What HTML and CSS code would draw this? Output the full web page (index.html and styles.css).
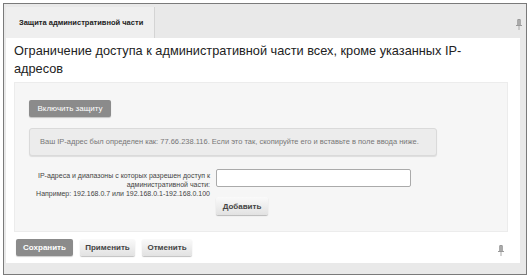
FILE: index.html
```html
<!DOCTYPE html>
<html lang="ru">
<head>
    <meta charset="UTF-8">
    <title>Защита административной части</title>
    <link rel="stylesheet" href="styles.css">
</head>
<body>
    <div class="frame">
        <div class="tabs">
            <div class="tab">Защита административной части</div>
            <span class="pin">
                <svg width="6" height="11" viewBox="0 0 6 11"><rect x="1.5" y="0" width="3" height="1" fill="#999"/><rect x="1" y="1" width="4" height="5" fill="#aaa"/><rect x="0" y="6" width="6" height="1" fill="#999"/><rect x="2.5" y="7" width="1" height="4" fill="#aaa"/></svg>
            </span>
        </div>
        <div class="panel">
            <h1>Ограничение доступа к административной части всех, кроме указанных IP-адресов</h1>
            <div class="box">
                <button type="button" class="btn dark">Включить защиту</button>
                <div class="note">Ваш IP-адрес был определен как: 77.66.238.116. Если это так, скопируйте его и вставьте в поле ввода ниже.</div>
                <div class="row">
                    <label for="ip">IP-адреса и диапазоны с которых разрешен доступ к<br>административной части:<br>Например: 192.168.0.7 или 192.168.0.1-192.168.0.100</label>
                    <div class="field">
                        <input type="text" id="ip" name="ip">
                        <button type="button" class="btn light">Добавить</button>
                    </div>
                </div>
            </div>
            <div class="actions">
                <button type="submit" class="btn dark">Сохранить</button>
                <button type="button" class="btn light">Применить</button>
                <button type="button" class="btn light">Отменить</button>
                <span class="pin">
                    <svg width="6" height="11" viewBox="0 0 6 11"><rect x="1.5" y="0" width="3" height="1" fill="#999"/><rect x="1" y="1" width="4" height="5" fill="#aaa"/><rect x="0" y="6" width="6" height="1" fill="#999"/><rect x="2.5" y="7" width="1" height="4" fill="#aaa"/></svg>
                </span>
            </div>
        </div>
    </div>
</body>
</html>
```

FILE: styles.css
```css
body {
    font-family: "Liberation Sans", Arial, sans-serif;
    background-color: #fff;
    margin: 0;
    padding: 3px;
}
.frame {
    width: 514px;
    height: 270px;
    border: 1px solid #7a7a7a;
    background-color: #e9e9e9;
    padding: 0 6px 0 2px;
}
.tabs {
    height: 34px;
    display: flex;
    align-items: flex-end;
    justify-content: space-between;
    margin-left: -2px;
}
.tab {
    width: 135px;
    height: 31px;
    margin-left: 2px;
    padding-left: 13px;
    background-color: #efefef;
    border-right: 1px solid #d4d4d4;
    font-size: 7.5px;
    font-weight: bold;
    color: #222;
    line-height: 31px;
}
.tabs .pin {
    margin: 0 -2px 11px 0;
}
.pin {
    display: block;
    width: 6px;
    height: 11px;
}
.panel {
    background-color: #fff;
    height: 225px;
    padding: 4px 8px 0 8px;
    box-sizing: border-box;
}
h1 {
    max-width: 470px;
    font-size: 12.75px;
    font-weight: normal;
    line-height: 18px;
    color: #222;
    margin: 0 0 4px 0;
}
.box {
    background-color: #f6f6f6;
    border: 1px solid #ececec;
    width: 494px;
    height: 150px;
    box-sizing: border-box;
    padding: 14px 14px 0 14px;
}
.btn {
    font-family: inherit;
    font-size: 8px;
    border: none;
    border-radius: 2px;
    height: 17px;
    padding: 0 8px;
    cursor: pointer;
}
.btn.dark {
    background-color: #8b8b8b;
    color: #fff;
    box-shadow: 0 1px 1px rgba(0, 0, 0, 0.2);
}
.btn.light {
    background: linear-gradient(#fafafa, #e2e2e2);
    color: #444;
    font-weight: bold;
    box-shadow: 0 1px 1px rgba(0, 0, 0, 0.25);
}
.box .btn.dark {
    width: 82px;
    padding: 0;
}
.note {
    width: 408px;
    height: 28px;
    margin-top: 11px;
    box-sizing: border-box;
    background-color: #ececec;
    border: 1px solid #dadada;
    border-radius: 3px;
    box-shadow: 0 1px 1px rgba(0, 0, 0, 0.1);
    padding-left: 10px;
    font-size: 7.5px;
    line-height: 26px;
    color: #777;
}
.row {
    display: flex;
    margin-top: 13px;
    margin-left: -15px;
}
label {
    width: 196px;
    text-align: right;
    font-size: 7px;
    line-height: 9px;
    color: #444;
    padding-top: 2px;
}
.field {
    margin-left: 6px;
}
input {
    display: block;
    width: 195px;
    height: 18px;
    box-sizing: border-box;
    border: 1px solid #aaa;
    border-radius: 2px;
    background-color: #fff;
}
.field .btn {
    margin-top: 10px;
    width: 52px;
    height: 18px;
    padding: 0;
}
.actions {
    display: flex;
    align-items: center;
    margin-top: 7px;
    margin-left: 2px;
    gap: 7px;
}
.actions .btn {
    font-weight: bold;
    padding: 0;
}
.actions .btn:nth-child(1) { width: 57px; }
.actions .btn:nth-child(2) { width: 55px; }
.actions .btn:nth-child(3) { width: 50px; }
.actions .pin {
    margin-left: auto;
    margin-right: 8px;
}
```
